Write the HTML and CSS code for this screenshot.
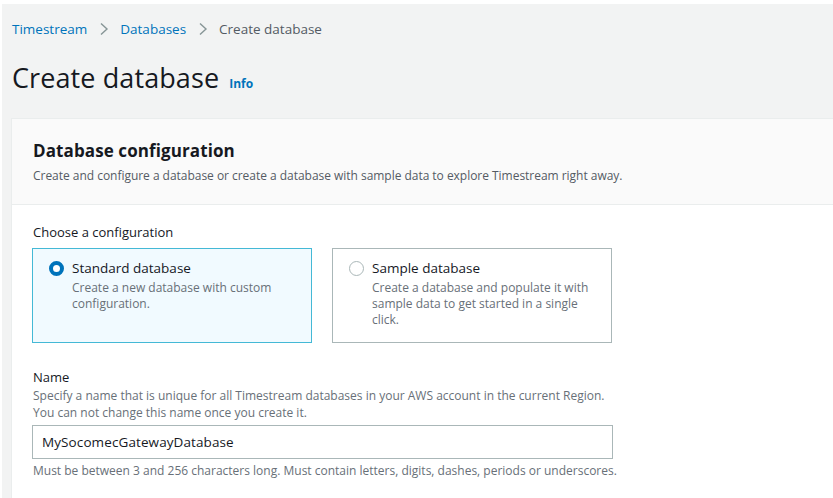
FILE: index.html
```html
<!DOCTYPE html>
<html lang="en">
<head>
<meta charset="utf-8">
<title>Create database</title>
<link rel="stylesheet" href="styles.css">
</head>
<body>
<div class="page">
  <nav class="crumbs">
    <a class="crumb-link" href="#">Timestream</a>
    <span class="crumb-sep"><svg width="10" height="14" viewBox="0 0 10 14"><path d="M2 1.5l6 5.5-6 5.5" fill="none" stroke="#879596" stroke-width="1.4"/></svg></span>
    <a class="crumb-link" href="#">Databases</a>
    <span class="crumb-sep"><svg width="10" height="14" viewBox="0 0 10 14"><path d="M2 1.5l6 5.5-6 5.5" fill="none" stroke="#879596" stroke-width="1.4"/></svg></span>
    <span class="crumb-current">Create database</span>
  </nav>

  <header class="title-row">
    <h1 class="title">Create database</h1>
    <a class="info" href="#">Info</a>
  </header>

  <section class="panel">
    <div class="panel-head">
      <h2 class="panel-title">Database configuration</h2>
      <p class="panel-desc">Create and configure a database or create a database with sample data to explore Timestream right away.</p>
    </div>
    <div class="panel-body">
      <div class="field">
        <div class="label">Choose a configuration</div>
        <div class="tiles">
          <label class="tile tile-selected">
            <span class="radio radio-on"></span>
            <span class="tile-text">
              <span class="tile-name">Standard database</span>
              <span class="tile-desc">Create a new database with custom configuration.</span>
            </span>
          </label>
          <label class="tile">
            <span class="radio"></span>
            <span class="tile-text">
              <span class="tile-name">Sample database</span>
              <span class="tile-desc">Create a database and populate it with sample data to get started in a single click.</span>
            </span>
          </label>
        </div>
      </div>

      <div class="field field-name">
        <div class="label">Name</div>
        <div class="hint">Specify a name that is unique for all Timestream databases in your AWS account in the current Region.<br>You can not change this name once you create it.</div>
        <div class="input">MySocomecGatewayDatabase</div>
        <div class="hint">Must be between 3 and 256 characters long. Must contain letters, digits, dashes, periods or underscores.</div>
      </div>
    </div>
  </section>
</div>
</body>
</html>
```

FILE: styles.css
```css
html, body {
  margin: 0;
  padding: 0;
  background: #ffffff;
}

body {
  font-family: "Open Sans", "Noto Sans", Arial, sans-serif;
  color: #16191f;
  overflow: hidden;
  height: 498px;
}

/* grey console area; the form panel fills the rest of the height */
.page {
  margin: 4px 0 0 2px;
  background: #f2f3f3;
  height: 494px;
  padding: 0 0 0 9px;
  box-sizing: border-box;
  display: flex;
  flex-direction: column;
  overflow: hidden;
}

.crumbs {
  display: flex;
  align-items: center;
  flex: none;
  height: 50px;
  padding-left: 1px;
  font-size: 13.5px;
  letter-spacing: 0;
}

.crumb-link {
  color: #0073bb;
  text-decoration: none;
}

.crumb-current {
  color: #545b64;
}

.crumb-sep {
  display: flex;
  margin: 0 11px 0 12px;
}

.title-row {
  display: flex;
  align-items: baseline;
  flex: none;
  gap: 10px;
  padding-left: 1px;
  height: 64px;
}

.title {
  margin: 0;
  font-size: 27px;
  font-weight: 400;
  letter-spacing: 0.1px;
  line-height: 48px;
  color: #16191f;
}

.info {
  font-size: 12px;
  font-weight: 700;
  color: #0073bb;
  text-decoration: none;
}

.panel {
  flex: 1;
  min-height: 0;
  background: #ffffff;
  border-left: 1px solid #eaeded;
  border-top: 1px solid #eaeded;
}

.panel-head {
  background: #fafafa;
  border-bottom: 1px solid #eaeded;
  padding: 19px 20px 19px 21px;
}

.panel-title {
  margin: 0;
  font-size: 17px;
  font-weight: 700;
  line-height: 26px;
  letter-spacing: 0.1px;
}

.panel-desc {
  margin: 3px 0 0;
  font-size: 12px;
  line-height: 18px;
  letter-spacing: -0.03px;
  color: #545b64;
}

.panel-body {
  padding: 16px 20px 0 20px;
}

.label {
  font-size: 13px;
  line-height: 22px;
  letter-spacing: 0;
  color: #16191f;
  padding-left: 1px;
}

.tiles {
  display: flex;
  gap: 20px;
  margin-top: 5px;
}

.tile {
  width: 280px;
  height: 95px;
  box-sizing: border-box;
  border: 1px solid #aab7b8;
  background: #ffffff;
  display: flex;
  align-items: flex-start;
  gap: 8px;
  padding: 8px 16px 0 16px;
}

.tile-selected {
  background: #f1faff;
  border-color: #44b9d6;
}

.radio {
  flex: none;
  width: 15px;
  height: 15px;
  margin-top: 4px;
  border-radius: 50%;
  border: 1px solid #aab7b8;
  box-sizing: border-box;
  background: #ffffff;
}

.radio-on {
  border: 4px solid #0073bb;
}

.tile-text {
  display: flex;
  flex-direction: column;
}

.tile-name {
  font-size: 13.5px;
  line-height: 23px;
  letter-spacing: 0;
  color: #16191f;
}

.tile-desc {
  font-size: 12px;
  line-height: 16px;
  letter-spacing: 0;
  color: #687078;
}

.field-name {
  margin-top: 24px;
}

.field-name .label {
  line-height: 20px;
}

.hint {
  font-size: 12px;
  line-height: 17px;
  letter-spacing: 0;
  color: #687078;
  padding-left: 1px;
}

.input {
  width: 581px;
  height: 34px;
  box-sizing: border-box;
  border: 1px solid #aab7b8;
  margin: 4px 0 3px;
  padding: 0 9px;
  display: flex;
  align-items: center;
  font-size: 13.5px;
  letter-spacing: 0.1px;
  color: #16191f;
  background: #ffffff;
}
```
